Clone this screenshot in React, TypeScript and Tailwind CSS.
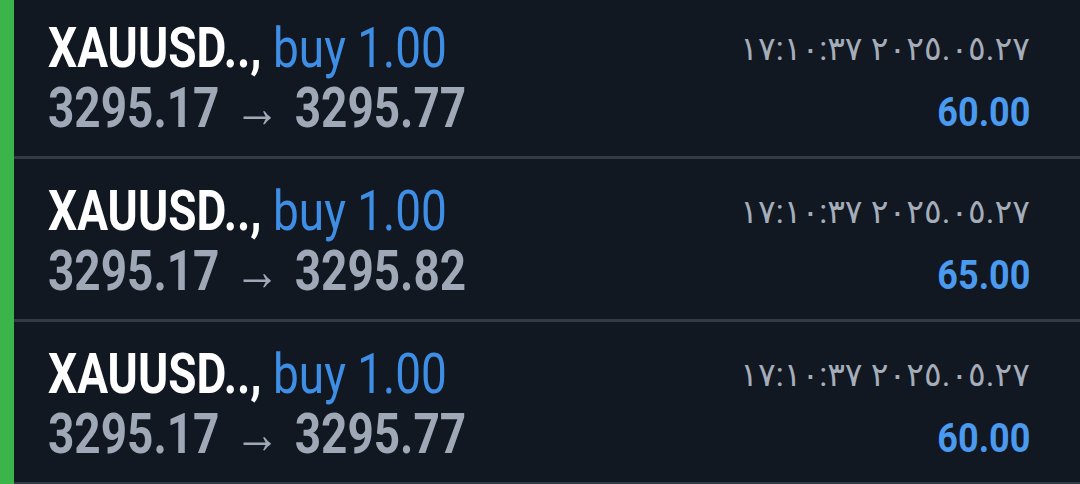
import React from 'react';

const trades = [
    { symbol: 'XAUUSD..,', side: 'buy 1.00', open: '3295.17', close: '3295.77', time: '٢٠٢٥.٠٥.٢٧ ١٧:١٠:٣٧', profit: '60.00' },
    { symbol: 'XAUUSD..,', side: 'buy 1.00', open: '3295.17', close: '3295.82', time: '٢٠٢٥.٠٥.٢٧ ١٧:١٠:٣٧', profit: '65.00' },
    { symbol: 'XAUUSD..,', side: 'buy 1.00', open: '3295.17', close: '3295.77', time: '٢٠٢٥.٠٥.٢٧ ١٧:١٠:٣٧', profit: '60.00' },
];

export default function App() {
    return (
        <div className="flex h-[484px] w-[1080px] overflow-hidden bg-[#121821] font-['Roboto',sans-serif]">
            {/* position side marker */}
            <div className="w-[14px] shrink-0 bg-[#3bb54a]" />

            <div className="-mt-[4px] flex flex-1 flex-col">
                {trades.map((t, i) => (
                    <div key={i} className="flex h-[163px] shrink-0 justify-between border-b-[3px] border-[#323a45] pl-[34px] pr-[50px]">
                        <div className="pt-[22px]">
                            <div className="origin-left scale-x-[0.82] whitespace-nowrap text-[56px] leading-[60px]">
                                <span className="font-bold text-white">{t.symbol}</span>{' '}
                                <span className="text-[#3f8ee6]">{t.side}</span>
                            </div>
                            <div className="origin-left scale-x-[0.82] whitespace-nowrap text-[56px] font-bold leading-[60px] text-[#9ea8b6]">
                                {t.open} <span className="inline-block px-[4px] font-normal">→</span> {t.close}
                            </div>
                        </div>

                        <div className="flex flex-col items-end pt-[38px]">
                            <div dir="rtl" className="whitespace-nowrap font-['Roboto','DejaVu_Sans',sans-serif] text-[33px] leading-[30px] text-[#a4adb9]">
                                {t.time}
                            </div>
                            <div className="mt-[25px] origin-right scale-x-[0.9] whitespace-nowrap text-[40px] font-bold leading-[48px] text-[#4a9af0]">
                                {t.profit}
                            </div>
                        </div>
                    </div>
                ))}
            </div>
        </div>
    );
}
